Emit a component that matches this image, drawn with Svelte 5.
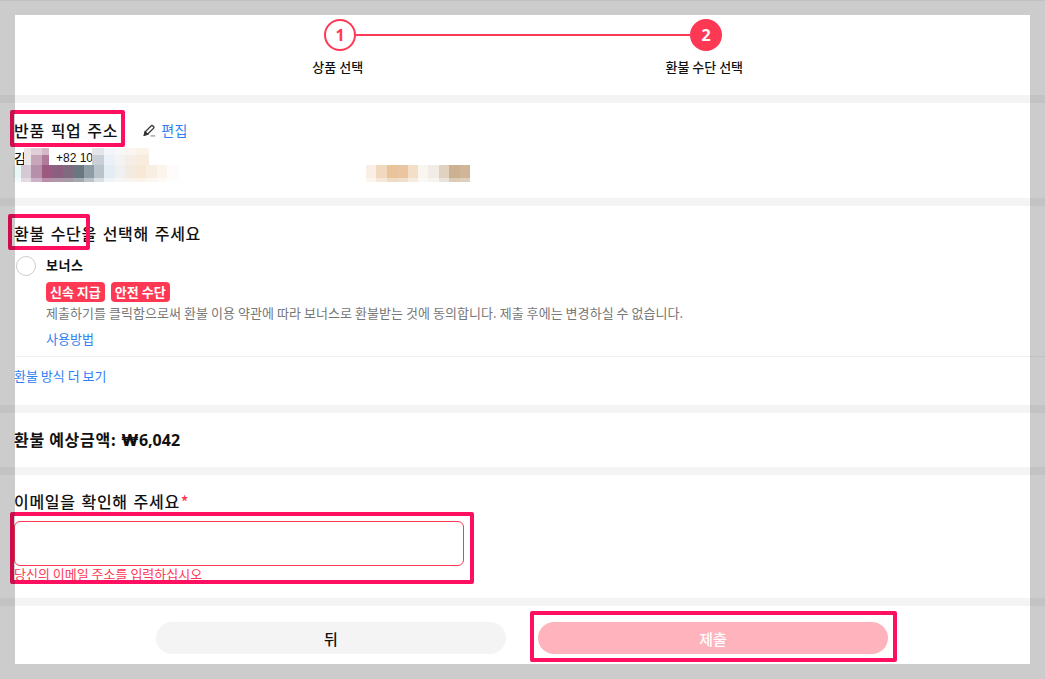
<script lang="ts">
	// mosaic cells that hide the address: [width, upper colour, lower colour]
	const nameCells = [
		[7, '#ece4e8', '#ece6ea'],
		[11, '#e0cfd9', '#c8a6ba'],
		[7, '#d3b8c8', '#b07b9b']
	];
	const phoneCells = [
		[12, '#e2e6ea', '#c8cfd6'],
		[11, '#f2f6fa', '#ecf1f7'],
		[10, '#f7f7f7', '#f3f3f3'],
		[11, '#faf5f0', '#f5ede6'],
		[13, '#fbf2e8', '#f8ecdf']
	];
	const addressLeft = [
		[8, '#e9f7f7', '#f4fbfb'],
		[10, '#d6c8d4', '#e4dae2'],
		[11, '#b690aa', '#cdb2c5'],
		[10, '#9c5a80', '#bb8fa9'],
		[11, '#8c5f80', '#b097a9'],
		[10, '#7f6a80', '#a89ba8'],
		[11, '#6b7680', '#a2a9b0'],
		[10, '#8f9ca6', '#bcc4ca'],
		[10, '#bac2ca', '#dadfe3'],
		[11, '#e4ecf4', '#f0f4f8'],
		[10, '#f0f0f0', '#f6f6f6'],
		[11, '#f3ebe2', '#f8f4ef'],
		[10, '#f8e8d6', '#fbf3ea'],
		[11, '#f8eee2', '#fbf6f0'],
		[10, '#fbf5ee', '#fdfaf7'],
		[12, '#fefcfa', '#fefdfc']
	];
	const addressRight = [
		[10, '#f9efe4', '#fbf5ee'],
		[11, '#f0d9bf', '#f6e8d8'],
		[11, '#e9c49b', '#f0dcc4'],
		[10, '#e9c6a1', '#f0dfca'],
		[10, '#f3dfc8', '#f7ebde'],
		[10, '#f9f6f0', '#fbf9f6'],
		[11, '#f1ece6', '#f7f4f0'],
		[10, '#e0d2bf', '#ebe3d9'],
		[11, '#ccb190', '#dccbb6'],
		[10, '#cfb698', '#dfcfbb']
	];
</script>

{#snippet mosaic(cells)}
	{#each cells as [w, top, bottom]}
		<span class="cell" style="width: {w}px">
			<i style="background: {top}"></i>
			<i style="background: {bottom}"></i>
		</span>
	{/each}
{/snippet}

<div class="page">
	<section class="steps">
		<div class="track">
			<span class="dot">1</span>
			<span class="line"></span>
			<span class="dot on">2</span>
		</div>
		<div class="labels">
			<span>상품 선택</span>
			<span>환불 수단 선택</span>
		</div>
	</section>

	<section class="address">
		<div class="title-row">
			<h2>반품 픽업 주소</h2>
			<a class="edit" href="#edit">
				<svg width="13" height="13" viewBox="0 0 13 13" fill="none" stroke="#333" stroke-width="1.3">
					<path d="M1.4 11 2.2 7.8 8.3 1.7a1 1 0 0 1 1.4 0l1 1a1 1 0 0 1 0 1.4L4.6 10.2Z" />
					<path d="M1.4 11 2.2 7.8 4.6 10.2Z" fill="#333" />
					<path d="M7.6 11.9h4.6" stroke="#999" />
				</svg>
				편집
			</a>
		</div>
		<div class="name-row">
			<span class="name">김</span>
			{@render mosaic(nameCells)}
			<span class="phone">+82 10</span>
			{@render mosaic(phoneCells)}
		</div>
		<div class="addr-row">
			{@render mosaic(addressLeft)}
			<span class="addr-gap"></span>
			{@render mosaic(addressRight)}
		</div>
	</section>

	<section class="method">
		<h2>환불 수단을 선택해 주세요</h2>
		<div class="option">
			<span class="radio"></span>
			<div class="option-body">
				<strong>보너스</strong>
				<div class="tags">
					<span>신속 지급</span>
					<span>안전 수단</span>
				</div>
				<p>제출하기를 클릭함으로써 환불 이용 약관에 따라 보너스로 환불받는 것에 동의합니다. 제출 후에는 변경하실 수 없습니다.</p>
				<a href="#how">사용방법</a>
			</div>
		</div>
		<a class="more" href="#more">환불 방식 더 보기</a>
	</section>

	<section class="amount">
		<h2>환불 예상금액: <span><b>₩</b>6,042</span></h2>
	</section>

	<section class="email">
		<h2>이메일을 확인해 주세요<em>*</em></h2>
		<input type="text" aria-label="이메일" />
		<p>당신의 이메일 주소를 입력하십시오</p>
	</section>

	<section class="actions">
		<button class="back">뒤</button>
		<button class="submit">제출</button>
	</section>

	<!-- review marks and the dimmed frame lie over the page -->
	<span class="mark m1"></span>
	<span class="mark m2"></span>
	<span class="mark m3"></span>
	<span class="mark m4"></span>
	<div class="frame"></div>
</div>

<style>
	:global(body) {
		background: #fff;
	}

	.page {
		position: relative;
		height: 679px;
		overflow: hidden;
		background: #fff;
		color: #111;
		font-family: 'Noto Sans CJK KR', 'Noto Sans', sans-serif;
		font-size: 13px;
	}

	section {
		box-sizing: border-box;
		padding: 0 15px 0 14px;
		border-bottom: 8px solid #f4f4f4;
	}

	h2 {
		margin: 0;
		font-size: 16px;
		line-height: 24px;
		font-weight: 500;
		letter-spacing: 0.7px;
		word-spacing: 1.5px;
	}

	a {
		color: #2f80f5;
		text-decoration: none;
	}

	.steps {
		height: 103px;
		padding-top: 19px;
	}

	.track {
		display: flex;
		align-items: center;
		width: 398px;
		margin: 0 auto;
		transform: translateX(1px);
	}

	.dot {
		box-sizing: border-box;
		flex: none;
		display: flex;
		align-items: center;
		justify-content: center;
		width: 32px;
		height: 32px;
		border: 2px solid #ff3854;
		border-radius: 50%;
		color: #ff3854;
		font-family: 'Open Sans', sans-serif;
		font-size: 16px;
		font-weight: 700;
	}

	.dot.on {
		background: #ff3854;
		color: #fff;
	}

	.line {
		flex: 1;
		height: 2px;
		background: #ff3854;
	}

	.labels {
		display: flex;
		width: 733px;
		margin: 6px auto 0;
		transform: translateX(-1px);
	}

	.labels span {
		flex: 1;
		text-align: center;
		line-height: 20px;
		font-weight: 500;
	}

	.address {
		height: 103px;
		padding-top: 15px;
	}

	.title-row {
		display: flex;
		align-items: center;
		gap: 25px;
	}

	.edit {
		display: flex;
		align-items: center;
		gap: 5px;
		font-size: 14px;
		line-height: 24px;
		letter-spacing: 0.6px;
	}

	.name-row {
		display: flex;
		height: 17px;
		margin-top: 6px;
		line-height: 20px;
	}

	.name {
		width: 10px;
		font-weight: 500;
	}

	.phone {
		width: 36px;
		padding-left: 7px;
		font-family: 'Liberation Sans', sans-serif;
		font-size: 12px;
		line-height: 21px;
		white-space: nowrap;
	}

	.addr-row {
		display: flex;
		height: 17px;
		margin-left: -1px;
	}

	.addr-row .cell :first-child {
		height: 13px;
	}

	.addr-gap {
		width: 187px;
	}

	.cell {
		display: flex;
		flex-direction: column;
	}

	.cell i {
		display: block;
		height: 7px;
	}

	.cell i:last-child {
		flex: 1;
	}

	.method {
		height: 207px;
		padding-top: 15px;
	}

	.option {
		display: flex;
		gap: 10px;
		height: 100px;
		margin: 7px -15px 0 2px;
		padding-top: 4px;
		border-bottom: 1px solid #f0f0f0;
	}

	.radio {
		box-sizing: border-box;
		flex: none;
		width: 20px;
		height: 20px;
		border: 1px solid #ccc;
		border-radius: 50%;
	}

	.option-body strong {
		display: block;
		line-height: 18px;
		font-weight: 700;
		letter-spacing: 0.6px;
	}

	.tags {
		display: flex;
		gap: 6px;
		margin-top: 8px;
	}

	.tags span {
		padding: 0 4px;
		border-radius: 4px;
		background: #ff3854;
		color: #fff;
		font-weight: 700;
		line-height: 20px;
	}

	.option-body p {
		margin: 1px 0 0;
		color: #777;
		line-height: 20px;
		letter-spacing: 0.05px;
		white-space: nowrap;
	}

	.option-body a {
		display: block;
		margin-top: 6px;
		line-height: 20px;
	}

	.more {
		display: block;
		margin-top: 9px;
		line-height: 20px;
	}

	.amount {
		height: 62px;
		padding-top: 14px;
	}

	.amount h2 {
		font-weight: 700;
		word-spacing: 0;
	}

	.amount span {
		font-family: 'Open Sans', sans-serif;
		letter-spacing: 0;
	}

	.amount b {
		font-family: Inter, sans-serif;
	}

	.email {
		height: 131px;
		padding-top: 14px;
	}

	.email em {
		margin-left: 1px;
		color: #ff3854;
		font-style: normal;
	}

	.email input {
		display: block;
		box-sizing: border-box;
		width: 450px;
		height: 45px;
		margin: 8px 0 0;
		border: 1px solid #ff3854;
		border-radius: 6px;
		background: #fff;
	}

	.email p {
		margin: 0;
		color: #ff3854;
		line-height: 16px;
	}

	.actions {
		display: flex;
		justify-content: center;
		gap: 32px;
		padding-top: 16px;
		border-bottom: none;
	}

	button {
		width: 350px;
		height: 32px;
		padding: 0;
		border: none;
		border-radius: 16px;
		font: inherit;
		font-size: 15px;
		font-weight: 500;
	}

	.back {
		background: #f4f4f4;
		color: #111;
	}

	.submit {
		background: #ffb3bc;
		color: #fff;
	}

	.mark {
		position: absolute;
		box-sizing: border-box;
		border: 4px solid #ff0f5f;
		border-radius: 2px;
	}

	.m1 {
		left: 10px;
		top: 110px;
		width: 115px;
		height: 37px;
	}

	.m2 {
		left: 8px;
		top: 214px;
		width: 82px;
		height: 36px;
	}

	.m3 {
		left: 10px;
		top: 512px;
		width: 464px;
		height: 72px;
	}

	.m4 {
		left: 530px;
		top: 611px;
		width: 367px;
		height: 51px;
	}

	.frame {
		position: absolute;
		inset: 0;
		border: 15px solid rgba(0, 0, 0, 0.2);
		pointer-events: none;
	}

	/* hairline along the very top edge of the window */
	.frame::before {
		content: '';
		position: absolute;
		top: -15px;
		left: -15px;
		right: -15px;
		height: 1px;
		background: rgba(0, 0, 0, 0.05);
	}
</style>
